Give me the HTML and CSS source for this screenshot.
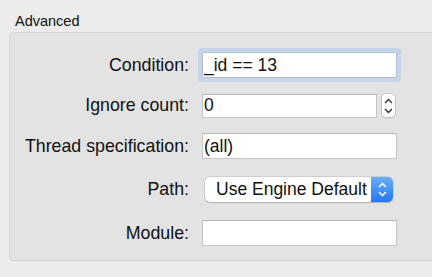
FILE: index.html
```html
<!DOCTYPE html>
<html lang="en">

<head>
    <meta charset="UTF-8">
    <meta name="viewport" content="width=device-width, initial-scale=1.0">
    <title>Breakpoint Options</title>
    <link rel="stylesheet" href="styles.css">
</head>

<body>

    <div class="group-title">Advanced</div>

    <div class="group-box">
        <div class="form-grid">
            <!-- Condition -->
            <label class="field-label" for="condition">Condition:</label>
            <div class="field-cell">
                <input class="text-field focused" id="condition" type="text" value="_id == 13">
            </div>

            <!-- Ignore count -->
            <label class="field-label" for="ignore">Ignore count:</label>
            <div class="field-cell">
                <input class="text-field short" id="ignore" type="text" value="0">
                <div class="stepper">
                    <svg width="9" height="6" viewBox="0 0 9 6"><path d="M1 5 L4.5 1.5 L8 5" fill="none" stroke="#333" stroke-width="1.4"/></svg>
                    <svg width="9" height="6" viewBox="0 0 9 6"><path d="M1 1 L4.5 4.5 L8 1" fill="none" stroke="#333" stroke-width="1.4"/></svg>
                </div>
            </div>

            <!-- Thread specification -->
            <label class="field-label" for="thread">Thread specification:</label>
            <div class="field-cell">
                <input class="text-field" id="thread" type="text" value="(all)">
            </div>

            <!-- Path -->
            <div class="field-label">Path:</div>
            <div class="field-cell">
                <div class="popup">
                    <span class="popup-text">Use Engine Default</span>
                    <span class="popup-arrows">
                        <svg width="9" height="6" viewBox="0 0 9 6"><path d="M1 5 L4.5 1.5 L8 5" fill="none" stroke="#fff" stroke-width="1.5"/></svg>
                        <svg width="9" height="6" viewBox="0 0 9 6"><path d="M1 1 L4.5 4.5 L8 1" fill="none" stroke="#fff" stroke-width="1.5"/></svg>
                    </span>
                </div>
            </div>

            <!-- Module -->
            <label class="field-label" for="module">Module:</label>
            <div class="field-cell">
                <input class="text-field" id="module" type="text" value="">
            </div>
        </div>
    </div>

</body>

</html>
```

FILE: styles.css
```css
body {
    font-family: "Liberation Sans", Arial, sans-serif;
    background-color: #ececec;
    margin: 0;
    padding: 0;
    width: 432px;
    height: 277px;
    overflow: hidden;
    color: #111;
}

.group-title {
    font-size: 14.5px;
    padding: 13px 0 0 15px;
    height: 19px;
}

.group-box {
    margin-left: 9px;
    width: 440px;
    height: 229px;
    background-color: #e3e3e3;
    border: 1px solid #d8d8d8;
    border-bottom-color: #d0d0d0;
    border-radius: 5px;
    box-sizing: border-box;
    padding-top: 12px;
}

.form-grid {
    display: grid;
    grid-template-columns: 179px 200px;
    grid-template-rows: 40px 41px 40px 47px 40px;
    column-gap: 13px;
    align-items: center;
}

.field-label {
    font-size: 17.8px;
    text-align: right;
}

.field-cell {
    display: flex;
    align-items: center;
    gap: 4px;
}

.text-field {
    font-family: inherit;
    font-size: 17.5px;
    width: 195px;
    height: 26px;
    box-sizing: border-box;
    margin: 0;
    padding: 0 2px 0 1px;
    background-color: #fff;
    border: 1px solid #c6c6c6;
    border-top-color: #b4b4b4;
    border-radius: 0;
    outline: none;
    color: #111;
}

.text-field.focused {
    border-color: #b0bcd0;
    box-shadow: 0 0 0 1px #c9d6ea, 0 0 0 4px #c6d4e9;
    border-radius: 1px;
}

.text-field.short {
    width: 175px;
    height: 24px;
}

.stepper {
    width: 15px;
    height: 25px;
    box-sizing: border-box;
    background-color: #fff;
    border: 1px solid #c4c4c4;
    border-radius: 5px;
    display: flex;
    flex-direction: column;
    align-items: center;
    justify-content: center;
    gap: 4px;
    box-shadow: 0 1px 0 rgba(0, 0, 0, 0.05);
}

.stepper svg {
    display: block;
}

.popup {
    margin-left: 3px;
    width: 188px;
    height: 25px;
    box-sizing: border-box;
    background-color: #fff;
    border-radius: 5px;
    box-shadow: 0 0 0 0.5px rgba(0, 0, 0, 0.18), 0 1px 1px rgba(0, 0, 0, 0.15);
    display: flex;
    align-items: center;
    justify-content: space-between;
    overflow: hidden;
}

.popup-text {
    font-size: 17.5px;
    padding-left: 11px;
}

.popup-arrows {
    width: 22px;
    height: 100%;
    background: linear-gradient(#6aaefc, #2577f3);
    display: flex;
    flex-direction: column;
    align-items: center;
    justify-content: center;
    gap: 3px;
}

.popup-arrows svg {
    display: block;
}
```
